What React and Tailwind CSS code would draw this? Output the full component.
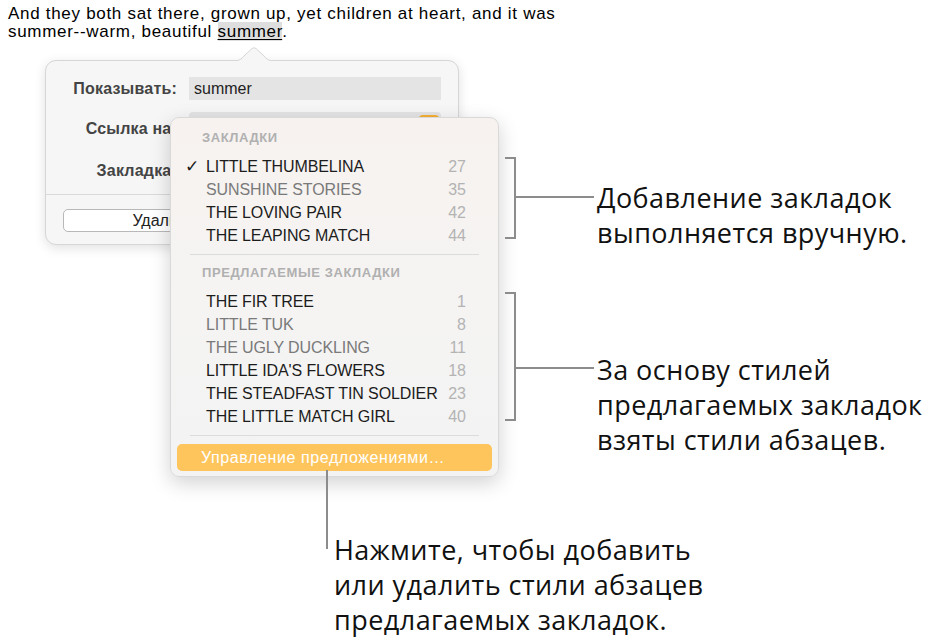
import React from "react";

const bookmarks = [
  { t: "LITTLE THUMBELINA", n: 27, dark: true, check: true },
  { t: "SUNSHINE STORIES", n: 35, dark: false },
  { t: "THE LOVING PAIR", n: 42, dark: true },
  { t: "THE LEAPING MATCH", n: 44, dark: true },
];
const suggested = [
  { t: "THE FIR TREE", n: 1, dark: true },
  { t: "LITTLE TUK", n: 8, dark: false },
  { t: "THE UGLY DUCKLING", n: 11, dark: false },
  { t: "LITTLE IDA'S FLOWERS", n: 18, dark: true },
  { t: "THE STEADFAST TIN SOLDIER", n: 23, dark: true },
  { t: "THE LITTLE MATCH GIRL", n: 40, dark: true },
];

function Item({ it }) {
  return (
    <div className="flex items-center h-[23px] pl-[14px] pr-[32px]">
      <span className="w-[21px] text-[17px] leading-none text-[#1b1b1b]">{it.check ? "✓" : ""}</span>
      <span className={"flex-1 text-[16px] tracking-[-0.1px] " + (it.dark ? "text-[#1c1c1c]" : "text-[#7a7a7a]")}>{it.t}</span>
      <span className="text-[16px] text-[#b3b3b3]">{it.n}</span>
    </div>
  );
}

export default function App() {
  return (
    <div className="relative w-[943px] h-[643px] bg-white overflow-hidden font-['Liberation_Sans',Arial,sans-serif] text-[#111]">
      <div className="pl-[8px] pt-[5px] text-[17px] leading-[18px] tracking-[0.7px] text-black">
        <div>And they both sat there, grown up, yet children at heart, and it was</div>
        <div>
          summer--warm, beautiful{" "}
          <span className="bg-[#dedede] underline underline-offset-[2px]">summer</span>.
        </div>
      </div>

      {/* popover */}
      <div className="absolute left-[45px] top-[60px] w-[414px] h-[185px] rounded-[11px] bg-[#f6f6f6] border border-[#d6d6d6] shadow-[0_3px_12px_rgba(0,0,0,0.12)]">
        <svg className="absolute left-[180px] top-[-14px]" width="56" height="15" viewBox="0 0 56 15">
          <path d="M0 14.5 C10 14.5 14 14 18 9 L26 1.5 Q28 0 30 1.5 L38 9 C42 14 46 14.5 56 14.5 L56 15 L0 15 Z" fill="#f6f6f6" stroke="#d6d6d6" strokeWidth="1" />
          <rect x="0" y="14" width="56" height="2" fill="#f6f6f6" />
        </svg>
        <div className="flex flex-col pt-[16px]">
          <div className="flex items-center h-[23px]">
            <div className="w-[131px] text-right text-[16px] tracking-[0.2px] font-bold text-[#444]">Показывать:</div>
            <div className="ml-[12px] w-[252px] h-[23px] bg-[#e4e4e4] flex items-center pl-[5px] text-[16px] text-[#222]">summer</div>
          </div>
          <div className="flex items-center h-[24px] mt-[12px]">
            <div className="w-[131px] text-right text-[16px] tracking-[0.2px] font-bold text-[#444] pt-[10px]">Ссылка на:</div>
            <div className="ml-[12px] w-[252px] h-[24px] bg-[#e4e4e4] rounded-[4px] flex justify-end pr-[2px] pt-[3px]">
              <div className="w-[20px] h-[18px] rounded-[4px] bg-[#f5b034]"></div>
            </div>
          </div>
          <div className="flex items-center h-[24px] mt-[23px]">
            <div className="w-[131px] text-right text-[16px] tracking-[0.2px] font-bold text-[#444]">Закладка:</div>
          </div>
          <div className="mt-[11px] h-px bg-[#d9d9d9]"></div>
          <div className="mt-[14px] ml-[17px] w-[200px] h-[23px] rounded-[5px] border border-[#b8b8b8] bg-white flex items-center justify-center text-[16px] text-[#222]">
            Удалить
          </div>
        </div>
      </div>

      {/* dropdown menu */}
      <div className="absolute left-[170px] top-[117px] w-[329px] h-[360px] rounded-[9px] border border-[#d9d9d9] bg-gradient-to-b from-[#f7f2ef] via-[#f5f4f3] to-[#f3f3f3] shadow-[0_6px_20px_rgba(0,0,0,0.18)] flex flex-col pt-[10px]">
        <div className="h-[20px] flex items-center pl-[31px] text-[13px] font-bold text-[#b0b0b0] tracking-[0.6px]">ЗАКЛАДКИ</div>
        <div className="mt-[7px] flex flex-col">
          {bookmarks.map((b) => <Item key={b.t} it={b} />)}
        </div>
        <div className="mt-[7px] mx-[19px] h-px bg-[#dcdcdc]"></div>
        <div className="mt-[8px] h-[20px] flex items-center pl-[31px] text-[13px] font-bold text-[#b0b0b0] tracking-[0.6px]">ПРЕДЛАГАЕМЫЕ ЗАКЛАДКИ</div>
        <div className="mt-[7px] flex flex-col">
          {suggested.map((b) => <Item key={b.t} it={b} />)}
        </div>
        <div className="mt-[7px] mx-[19px] h-px bg-[#dcdcdc]"></div>
        <div className="mt-[8px] mx-[6px] h-[27px] rounded-[5px] bg-[#fec55d] flex items-center pl-[24px] text-[16px] tracking-[0.6px] text-white">
          Управление предложениями…
        </div>
      </div>

      <div className="font-['Open_Sans',sans-serif] text-[27px] leading-[35px] tracking-[0.45px] text-[#111]">
        {/* callout 1 */}
        <div className="absolute left-[505px] top-[157px] w-[11px] h-[82px] border-2 border-l-0 border-[#8c8c8c]"></div>
        <div className="absolute left-[516px] top-[196px] w-[78px] h-[2px] bg-[#8c8c8c]"></div>
        <div className="absolute left-[597px] top-[180px]">
          <div>Добавление закладок</div>
          <div>выполняется вручную.</div>
        </div>

        {/* callout 2 */}
        <div className="absolute left-[505px] top-[292px] w-[11px] h-[129px] border-2 border-l-0 border-[#8c8c8c]"></div>
        <div className="absolute left-[516px] top-[367px] w-[78px] h-[2px] bg-[#8c8c8c]"></div>
        <div className="absolute left-[597px] top-[352px]">
          <div>За основу стилей</div>
          <div>предлагаемых закладок</div>
          <div>взяты стили абзацев.</div>
        </div>

        {/* callout 3 */}
        <div className="absolute left-[326px] top-[470px] w-[2px] h-[79px] bg-[#8c8c8c]"></div>
        <div className="absolute left-[334px] top-[532px]">
          <div>Нажмите, чтобы добавить</div>
          <div>или удалить стили абзацев</div>
          <div>предлагаемых закладок.</div>
        </div>
      </div>
    </div>
  );
}
